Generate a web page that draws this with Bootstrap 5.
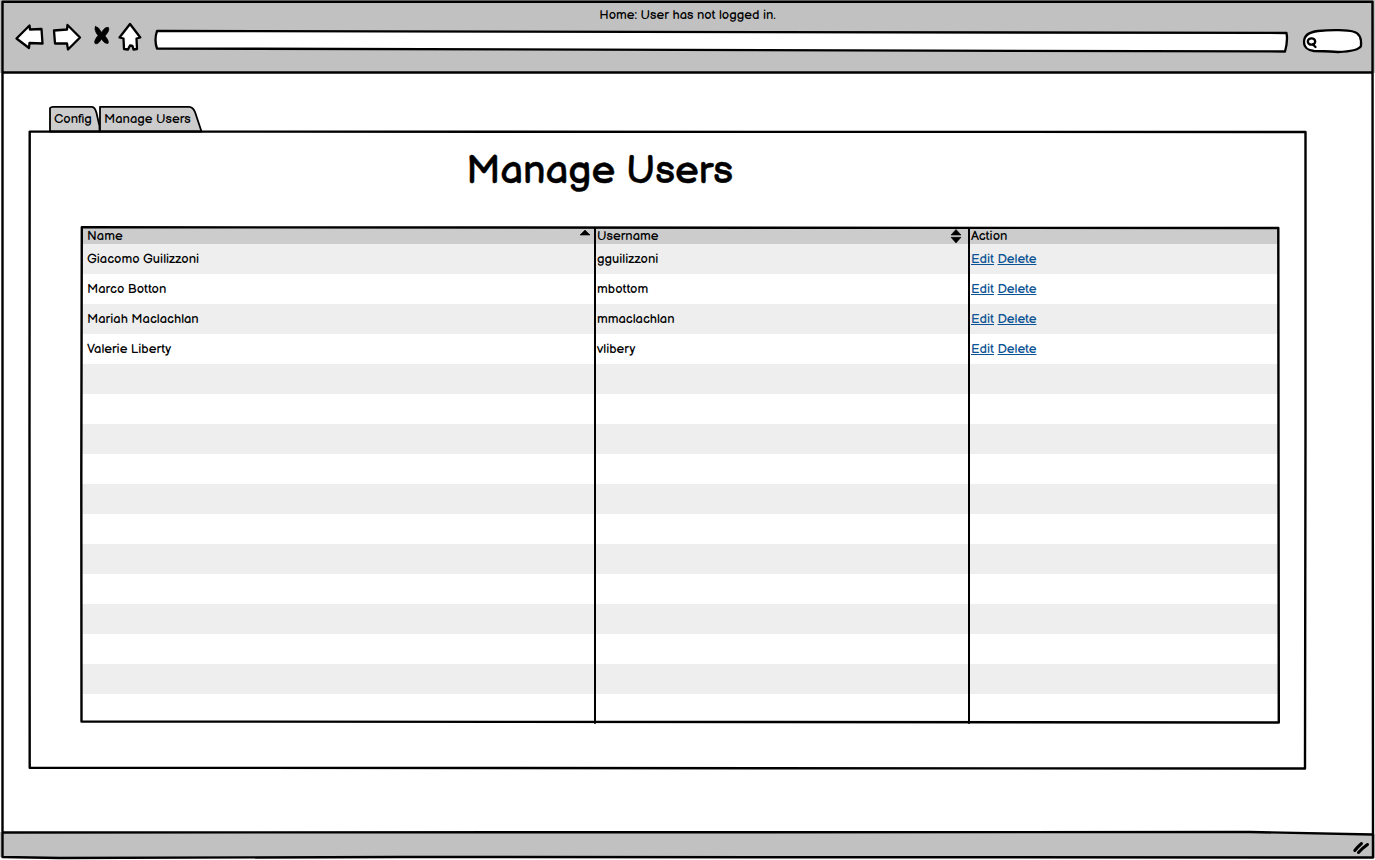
<!DOCTYPE html>
<html lang="en">
<head>
<meta charset="utf-8">
<meta name="viewport" content="width=device-width, initial-scale=1">
<title>Manage Users</title>
<link rel="stylesheet" href="https://cdn.jsdelivr.net/npm/bootstrap@5.3.0/dist/css/bootstrap.min.css">
<style>
body{font-family:"Balsamiq Sans",Inter,"Liberation Sans",sans-serif;font-size:13px;line-height:18px;color:#000;background:#fff;overflow:hidden}
.window{width:1375px;height:860px}
.chrome{height:73px;background:#c1c1c1}
.caption{padding-top:6px}
.tools{padding-left:15px;height:36px;margin-top:-1px}
.address{margin:7px 0 0 9px}
.search{margin:5px 0 0 14px}
.foot{height:28px;background:#c1c1c1;clip-path:polygon(0 0,93% 0,100% 2px,100% 26px,0 25px)}
.sketch{fill:none;stroke:#000;stroke-width:2.4;stroke-linejoin:round;stroke-linecap:round;pointer-events:none}
svg{display:block;flex:none;overflow:visible}
.ink{fill:#fff;stroke:#000;stroke-width:2.3;stroke-linejoin:round;stroke-linecap:round}
.tabs{padding:33px 0 0 49px;height:58px}
.tabs .nav-link{height:25px;padding:4px 0 0 5px;color:#000;line-height:18px}
.tab-config{width:50px}
.tab-users{width:104px}
.tab-shape{fill:#ccc;stroke:#000;stroke-width:1.8;stroke-linejoin:round}
.panel{width:1277px;height:638px;margin-left:29px}
.panel h1{width:1141px;padding-top:16px;font-size:40px;line-height:48px;font-weight:400;-webkit-text-stroke:.4px}
.grid-box{width:1198px;height:495px;margin:32px 0 0 52px}
.grid-box table{width:1197px;table-layout:fixed;font-size:13px;line-height:18px}
.grid-box th,.grid-box td{padding:0 0 0 2px;border:0;font-weight:400;white-space:nowrap;vertical-align:middle;color:#000}
.grid-box th:first-child,.grid-box td:first-child{padding-left:6px}
.grid-box th{height:17px;line-height:17px;background:#ccc}
.grid-box th span{position:relative;top:1px}
.grid-box td{height:30px}
.grid-box tbody tr:last-child td{height:28px}
.grid-box tbody tr:nth-child(odd) td{background:#eee}
.grid-box a{color:#0b5394;text-underline-offset:1px;text-decoration-thickness:1px}
</style>
</head>
<body>
<div class="window position-relative d-flex flex-column">
  <header class="chrome">
    <div class="caption text-center">Home: User has not logged in.</div>
    <div class="tools d-flex">
      <svg width="130" height="36" class="ink"><path d="M1.500 15.500 14.500 2.500 15 6.500 26.500 6 27.500 20.500 14.500 20 14 25Z"/><path d="M39 7.500 52 6.500 52.500 2 65 14.500 53 26.500 52 20.500 40 20.500Z"/><path d="M80.500 3.500Q83.500 3.500 86.500 9.500 90 3.500 93.500 4.500 95 7.500 90 13 94.500 18 93 20.500 89.500 21 86.500 16 83 22 80 20.500 78.500 18 83 12.500 78.500 6.500 80.500 3.500Z" fill="#000" stroke-width=".7"/><path d="M115 1 125.300 14.500 121.500 15.500 122 26 118.500 26.500 117.500 23 115 22.500 113 26.500 109 26 108.500 15.500 104.500 14.500Z"/></svg>
      <svg width="1134" height="24" class="ink address"><path d="M3 1Q560 1.500 1132.500 3 1134 11 1131 21.500 560 19.500 3 18.500 0 10 3 1Z"/></svg>
      <svg width="62" height="26" class="ink search"><path d="M2 14C2 8 7 4 16 3 30 1.500 46 2 51 3.500 58 5 59.500 12 59 18 57 22 50 23.500 36 24 28 23.500 20 23 12 23 6 22.500 2 19 2 14Z"/><ellipse cx="9.500" cy="13.500" rx="3.700" ry="3.200"/><path d="M11 16.500 13.500 19"/></svg>
    </div>
  </header>
  <main class="flex-grow-1 overflow-hidden">
    <nav class="tabs nav">
      <a class="nav-link position-relative tab-config"><svg class="position-absolute top-0 start-0" width="50" height="25"><path class="tab-shape" d="M1 25.500V2Q2 .800 4 .800H43Q46 1 47.500 7L50.500 20V25.500Z"/></svg><span class="position-relative">Config</span></a>
      <a class="nav-link position-relative tab-users"><svg class="position-absolute top-0 start-0" width="104" height="25"><path class="tab-shape" d="M1 25.500V.800H90Q94 1 96 6L102.500 25.500Z"/></svg><span class="position-relative">Manage Users</span></a>
    </nav>
    <section class="panel position-relative">
      <svg class="sketch position-absolute top-0 start-0" width="1277" height="638"><path d="M.700 .600Q600 -.500 1276.500 1V300L1276 637.500Q600 638 .700 636.800L.500 300Z"/></svg>
      <h1 class="text-center m-0">Manage Users</h1>
      <div class="grid-box position-relative">
        <table class="table m-0">
          <colgroup><col style="width:514px"><col style="width:374px"><col></colgroup>
          <thead><tr>
            <th><div class="d-flex justify-content-between"><span>Name</span><svg width="16" height="16"><path d="M1 8 6 3 11 8Z" stroke="#000" stroke-width=".6"/></svg></div></th>
            <th><div class="d-flex justify-content-between"><span>Username</span><svg width="18" height="16"><path d="M0 8 5 2.500 10 8ZM0 10.300H10L5 16Z" stroke="#000" stroke-width=".6"/></svg></div></th>
            <th><span>Action</span></th></tr></thead>
          <tbody>
            <tr><td>Giacomo Guilizzoni</td><td>gguilizzoni</td><td><a href="#">Edit</a> <a href="#">Delete</a></td></tr>
            <tr><td>Marco Botton</td><td>mbottom</td><td><a href="#">Edit</a> <a href="#">Delete</a></td></tr>
            <tr><td>Mariah Maclachlan</td><td>mmaclachlan</td><td><a href="#">Edit</a> <a href="#">Delete</a></td></tr>
            <tr><td>Valerie Liberty</td><td>vlibery</td><td><a href="#">Edit</a> <a href="#">Delete</a></td></tr>
            <tr><td></td><td></td><td></td></tr>
            <tr><td></td><td></td><td></td></tr>
            <tr><td></td><td></td><td></td></tr>
            <tr><td></td><td></td><td></td></tr>
            <tr><td></td><td></td><td></td></tr>
            <tr><td></td><td></td><td></td></tr>
            <tr><td></td><td></td><td></td></tr>
            <tr><td></td><td></td><td></td></tr>
            <tr><td></td><td></td><td></td></tr>
            <tr><td></td><td></td><td></td></tr>
            <tr><td></td><td></td><td></td></tr>
            <tr><td></td><td></td><td></td></tr>
          </tbody>
        </table>
        <svg class="sketch position-absolute top-0 start-0" width="1198" height="495"><path d="M.800 .300Q600 .300 1197.300 1L1197.800 495.500Q600 495 .500 494.500L.300 250Z"/><path d="M514 1V496M888 1V496" stroke-width="2"/></svg>
      </div>
    </section>
  </main>
  <footer class="foot d-flex justify-content-end"><svg width="22" height="28"><path d="M1.800 18.500Q5 14.500 8.500 11.500M5.500 20.500Q9 16.500 14.500 12.500" fill="none" stroke="#000" stroke-width="3" stroke-linecap="round"/></svg></footer>
  <svg class="sketch position-absolute top-0 start-0" width="1375" height="860"><path d="M2.500 1.700H1372.500L1373 857.500Q700 858 400 857 150 857 60 858L2.500 857ZM3 72.500H1372M3 832.500Q700 832 1250 832L1372 834.500"/></svg>
</div>
<script src="https://cdn.jsdelivr.net/npm/bootstrap@5.3.0/dist/js/bootstrap.bundle.min.js"></script>
</body>
</html>
